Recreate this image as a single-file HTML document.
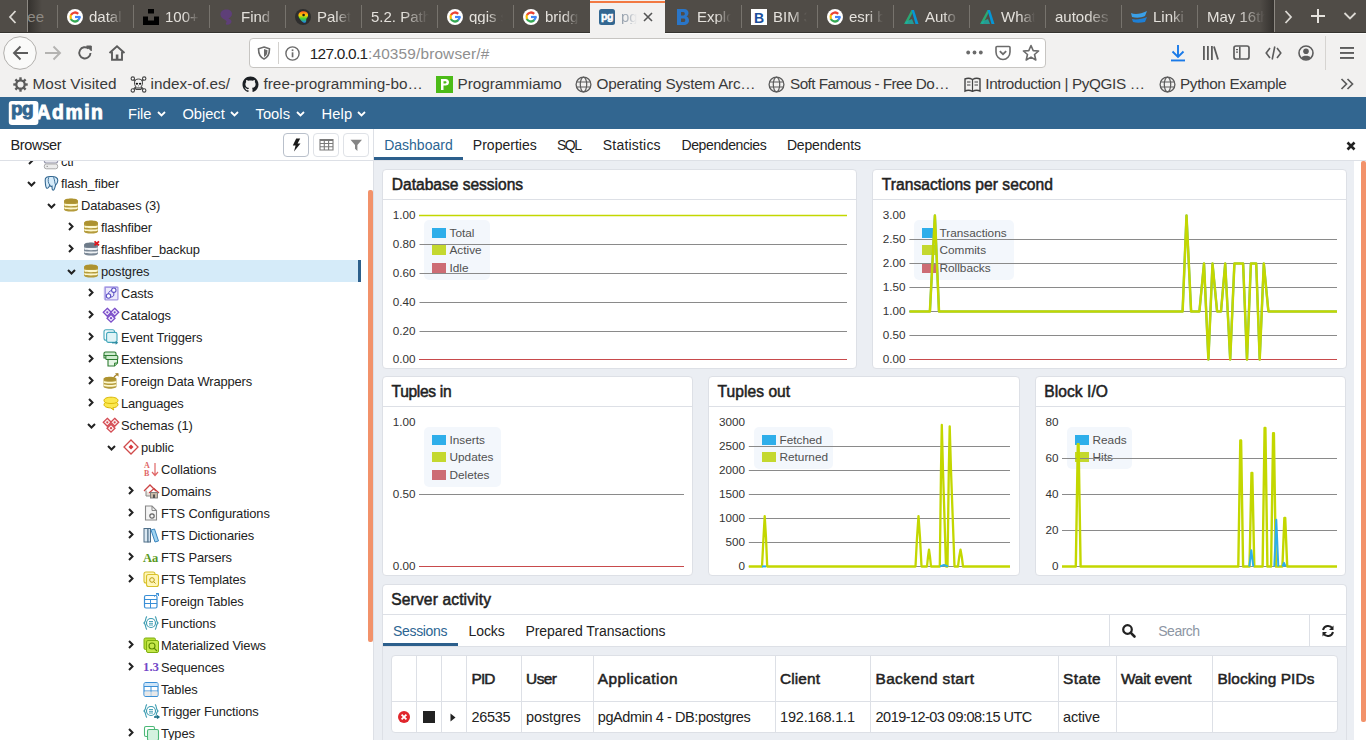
<!DOCTYPE html>
<html><head><meta charset="utf-8"><style>
*{box-sizing:border-box;margin:0;padding:0}
html,body{width:1366px;height:740px;overflow:hidden;background:#fff;font-family:"Liberation Sans",sans-serif}
svg{position:absolute;overflow:visible}
.a{position:absolute}
.t{position:absolute;white-space:nowrap}
#tabbar{position:absolute;left:0;top:0;width:1366px;height:33px;background:#4e4b46}
.tsep{position:absolute;top:5px;width:1px;height:23px;background:#75716b}
.ttx{position:absolute;top:8px;font-size:15px;color:#e6e3de;white-space:nowrap;overflow:hidden}
#nav{position:absolute;left:0;top:33px;width:1366px;height:38px;background:#f2f1f0}
#url{position:absolute;left:249px;top:5px;width:797px;height:30px;background:#fff;border:1px solid #c9c7c4;border-radius:3px}
#bm{position:absolute;left:0;top:71px;width:1366px;height:26px;background:#f2f1f0}
.bmt{position:absolute;top:4px;font-size:15.3px;color:#3c3c3c;white-space:nowrap}
#pgnav{position:absolute;left:0;top:97px;width:1366px;height:32px;background:#326690}
.menu{position:absolute;top:7px;font-size:14.7px;color:#fff;white-space:nowrap}
#brhead{position:absolute;left:0;top:129px;width:373px;height:32px;background:#fff;border-bottom:1px solid #dde0e6}
#tree{position:absolute;left:0;top:161px;width:373px;height:579px;background:#fff;overflow:hidden}
.row{position:absolute;left:0;width:361px;height:22px}
.rt{position:absolute;top:4px;font-size:13px;color:#222;white-space:nowrap}
#vsplit{position:absolute;left:373px;top:129px;width:1px;height:611px;background:#dde0e6}
#dhead{position:absolute;left:374px;top:129px;width:992px;height:32px;background:#fff;border-bottom:1px solid #dde0e6}
.dtab{position:absolute;top:8px;font-size:14px;color:#222;white-space:nowrap}
#dash{position:absolute;left:374px;top:161px;width:980px;height:579px;background:#ebeef3}
.card{position:absolute;background:#fff;border:1px solid #dde0e6;border-radius:4px;overflow:hidden}
.ctitle{position:absolute;left:8px;top:7px;font-size:14.6px;font-weight:bold;color:#222;white-space:nowrap}
.chead{position:absolute;left:0;top:0;width:100%;height:30px;border-bottom:1px solid #dde0e6}
.ylab{position:absolute;font-size:11.7px;color:#333;text-align:right;white-space:nowrap}
.leg{position:absolute;background:rgba(236,243,252,0.6);border-radius:5px}
.sw{position:absolute;width:14px;height:10px}
.lt{position:absolute;font-size:11.8px;color:#444;white-space:nowrap}
</style></head><body>
<div class="a" style="left:0px;top:0px;width:1366px;height:33px;background:#504c47"></div>
<div class="a" style="left:57px;top:5px;width:1px;height:23px;background:#77736d"></div>
<div class="a" style="left:133px;top:5px;width:1px;height:23px;background:#77736d"></div>
<div class="a" style="left:209px;top:5px;width:1px;height:23px;background:#77736d"></div>
<div class="a" style="left:285px;top:5px;width:1px;height:23px;background:#77736d"></div>
<div class="a" style="left:361px;top:5px;width:1px;height:23px;background:#77736d"></div>
<div class="a" style="left:437px;top:5px;width:1px;height:23px;background:#77736d"></div>
<div class="a" style="left:513px;top:5px;width:1px;height:23px;background:#77736d"></div>
<div class="a" style="left:741px;top:5px;width:1px;height:23px;background:#77736d"></div>
<div class="a" style="left:817px;top:5px;width:1px;height:23px;background:#77736d"></div>
<div class="a" style="left:893px;top:5px;width:1px;height:23px;background:#77736d"></div>
<div class="a" style="left:969px;top:5px;width:1px;height:23px;background:#77736d"></div>
<div class="a" style="left:1045px;top:5px;width:1px;height:23px;background:#77736d"></div>
<div class="a" style="left:1121px;top:5px;width:1px;height:23px;background:#77736d"></div>
<div class="a" style="left:1197px;top:5px;width:1px;height:23px;background:#77736d"></div>
<div class="a" style="left:27px;top:0px;width:1px;height:33px;background:#8d8983"></div>
<div class="a" style="left:28px;top:0px;width:14px;height:33px;background:linear-gradient(to right,rgba(30,28,26,0.55),rgba(80,76,71,0))"></div>
<svg style="left:8px;top:9px;" width="10" height="16" viewBox="0 0 10 16"><path d="M7.5 2 L2 8 L7.5 14" fill="none" stroke="#dcd9d4" stroke-width="1.8"/></svg>
<div class="a" style="left:1274px;top:0px;width:1px;height:33px;background:#8d8983"></div>
<div class="a" style="left:1260px;top:0px;width:14px;height:33px;background:linear-gradient(to left,rgba(30,28,26,0.55),rgba(80,76,71,0))"></div>
<svg style="left:1283px;top:9px;" width="10" height="16" viewBox="0 0 10 16"><path d="M2.5 2 L8 8 L2.5 14" fill="none" stroke="#dcd9d4" stroke-width="1.8"/></svg>
<svg style="left:1310px;top:8px;" width="16" height="16" viewBox="0 0 16 16"><path d="M8 1 V15 M1 8 H15" fill="none" stroke="#e6e3de" stroke-width="2"/></svg>
<svg style="left:1343px;top:11px;" width="14" height="10" viewBox="0 0 14 10"><path d="M1.5 2 L7 7.5 L12.5 2" fill="none" stroke="#dcd9d4" stroke-width="1.8"/></svg>
<div class="t" style="left:28px;top:9.30px;font-size:15px;line-height:15px;color:#8d8983;width:16px;overflow:hidden;direction:rtl">ee</div>
<svg style="left:67px;top:9px;" width="16" height="16" viewBox="0 0 16 16"><circle cx="8" cy="8" r="8" fill="#fff"/><path d="M12.50 8.00 A4.5 4.5 0 0 1 10.89 11.45" fill="none" stroke="#4285f4" stroke-width="2.3"/><path d="M11.18 11.18 A4.5 4.5 0 0 1 3.77 9.54" fill="none" stroke="#34a853" stroke-width="2.3"/><path d="M3.92 9.90 A4.5 4.5 0 0 1 4.31 5.42" fill="none" stroke="#fbbc05" stroke-width="2.3"/><path d="M4.10 5.75 A4.5 4.5 0 0 1 11.18 4.82" fill="none" stroke="#ea4335" stroke-width="2.3"/><rect x="8" y="6.9" width="5.65" height="2.2" fill="#4285f4"/></svg>
<div class="t" style="left:89px;top:9.30px;font-size:15px;line-height:15px;color:#e4e1dc;width:34px;overflow:hidden;-webkit-mask-image:linear-gradient(to right,#000 55%,transparent 100%)">datal</div>
<svg style="left:143px;top:9px;" width="16" height="16" viewBox="0 0 16 16"><rect x="5" y="0" width="6" height="4.5" fill="#000"/><path d="M0 7.5 H5 V11.5 H11 V7.5 H16 V16 H0Z" fill="#000"/></svg>
<div class="t" style="left:165px;top:9.30px;font-size:15px;line-height:15px;color:#e4e1dc;width:34px;overflow:hidden;-webkit-mask-image:linear-gradient(to right,#000 55%,transparent 100%)">100+</div>
<svg style="left:219px;top:9px;" width="16" height="16" viewBox="0 0 16 16"><path d="M1.5 6 C1 2.5 4 0.5 7.5 0.5 C11 0.5 13 2.5 13 5 C13 7.5 11 8.5 9.5 9.5 C10.5 10 12.5 10.5 12.5 12.5 C12.5 14.5 10.5 16 8 15.8 C6.5 15.7 6.5 14 7.5 13.2 C8.3 12.6 6.8 11.5 5.5 10.5 C3.5 9.5 1.8 8.5 1.5 6Z" fill="#5e3f78"/></svg>
<div class="t" style="left:241px;top:9.30px;font-size:15px;line-height:15px;color:#e4e1dc;width:34px;overflow:hidden;-webkit-mask-image:linear-gradient(to right,#000 55%,transparent 100%)">Find</div>
<svg style="left:295px;top:9px;" width="16" height="16" viewBox="0 0 16 16"><defs><linearGradient id="rb" x1="0" y1="0" x2="0" y2="1"><stop offset="0" stop-color="#ff5a1f"/><stop offset="0.35" stop-color="#ffd000"/><stop offset="0.65" stop-color="#3cd13c"/><stop offset="1" stop-color="#1e7bff"/></linearGradient></defs><circle cx="8" cy="8" r="8" fill="#2e2e2e"/><path d="M3.5 7 C3 3.5 6 2 9 2.2 C12 2.4 13.5 4.5 13 7 C12.6 8.8 11 9.5 11.2 11 C11.5 13 10.5 14 9 13.8 C7.5 13.5 6.5 12 5.5 10.8 C4.5 9.5 3.7 8.5 3.5 7Z" fill="url(#rb)"/><circle cx="8.6" cy="6" r="1.3" fill="#1a1a1a"/></svg>
<div class="t" style="left:317px;top:9.30px;font-size:15px;line-height:15px;color:#e4e1dc;width:34px;overflow:hidden;-webkit-mask-image:linear-gradient(to right,#000 55%,transparent 100%)">Palet</div>
<div class="t" style="left:371px;top:9.30px;font-size:15px;line-height:15px;color:#e4e1dc;width:58px;overflow:hidden;-webkit-mask-image:linear-gradient(to right,#000 55%,transparent 100%)">5.2. Path</div>
<svg style="left:447px;top:9px;" width="16" height="16" viewBox="0 0 16 16"><circle cx="8" cy="8" r="8" fill="#fff"/><path d="M12.50 8.00 A4.5 4.5 0 0 1 10.89 11.45" fill="none" stroke="#4285f4" stroke-width="2.3"/><path d="M11.18 11.18 A4.5 4.5 0 0 1 3.77 9.54" fill="none" stroke="#34a853" stroke-width="2.3"/><path d="M3.92 9.90 A4.5 4.5 0 0 1 4.31 5.42" fill="none" stroke="#fbbc05" stroke-width="2.3"/><path d="M4.10 5.75 A4.5 4.5 0 0 1 11.18 4.82" fill="none" stroke="#ea4335" stroke-width="2.3"/><rect x="8" y="6.9" width="5.65" height="2.2" fill="#4285f4"/></svg>
<div class="t" style="left:469px;top:9.30px;font-size:15px;line-height:15px;color:#e4e1dc;width:34px;overflow:hidden;-webkit-mask-image:linear-gradient(to right,#000 55%,transparent 100%)">qgis s</div>
<svg style="left:523px;top:9px;" width="16" height="16" viewBox="0 0 16 16"><circle cx="8" cy="8" r="8" fill="#fff"/><path d="M12.50 8.00 A4.5 4.5 0 0 1 10.89 11.45" fill="none" stroke="#4285f4" stroke-width="2.3"/><path d="M11.18 11.18 A4.5 4.5 0 0 1 3.77 9.54" fill="none" stroke="#34a853" stroke-width="2.3"/><path d="M3.92 9.90 A4.5 4.5 0 0 1 4.31 5.42" fill="none" stroke="#fbbc05" stroke-width="2.3"/><path d="M4.10 5.75 A4.5 4.5 0 0 1 11.18 4.82" fill="none" stroke="#ea4335" stroke-width="2.3"/><rect x="8" y="6.9" width="5.65" height="2.2" fill="#4285f4"/></svg>
<div class="t" style="left:545px;top:9.30px;font-size:15px;line-height:15px;color:#e4e1dc;width:34px;overflow:hidden;-webkit-mask-image:linear-gradient(to right,#000 55%,transparent 100%)">bridg</div>
<div class="a" style="left:590px;top:0px;width:75px;height:33px;background:#f2f1f0"></div>
<div class="a" style="left:590px;top:1px;width:75px;height:2px;background:#f27942"></div>
<svg style="left:599px;top:9px;" width="16" height="16" viewBox="0 0 16 16"><rect x="0" y="0" width="16" height="16" rx="2.5" fill="#336791"/><text x="8" y="11.3" font-family="Liberation Sans" font-weight="bold" font-size="10.5" fill="#fff" stroke="#fff" stroke-width="0.5" text-anchor="middle" letter-spacing="-0.4">pg</text></svg>
<div class="t" style="left:621px;top:9.30px;font-size:15px;line-height:15px;color:#9aa4b0;width:16px;overflow:hidden;-webkit-mask-image:linear-gradient(to right,#000 30%,transparent 100%)">pg</div>
<svg style="left:643px;top:12px;" width="10" height="10" viewBox="0 0 10 10"><path d="M1 1 L9 9 M9 1 L1 9" stroke="#555" stroke-width="1.6"/></svg>
<svg style="left:677px;top:9px;" width="12" height="16" viewBox="0 0 12 16"><path d="M0 0 H7 C10 0 11.5 2 11.5 4 C11.5 5.6 10.6 6.8 9.5 7.5 C11 8.1 12 9.6 12 11.5 C12 14 10 16 6.5 16 H0Z M4 3 V6.5 H6.3 C7.3 6.5 7.8 5.8 7.8 4.8 C7.8 3.7 7.2 3 6.2 3Z M4 9.5 V13 H6.6 C7.7 13 8.3 12.3 8.3 11.2 C8.3 10.2 7.7 9.5 6.6 9.5Z" fill="#2a76c8"/></svg>
<div class="t" style="left:697px;top:9.30px;font-size:15px;line-height:15px;color:#e4e1dc;width:34px;overflow:hidden;-webkit-mask-image:linear-gradient(to right,#000 55%,transparent 100%)">Explo</div>
<svg style="left:751px;top:9px;" width="16" height="16" viewBox="0 0 16 16"><rect width="16" height="16" fill="#fff"/><text x="8" y="13.5" font-family="Liberation Sans" font-weight="bold" font-size="14" fill="#1a4f9c" text-anchor="middle">B</text></svg>
<div class="t" style="left:773px;top:9.30px;font-size:15px;line-height:15px;color:#e4e1dc;width:34px;overflow:hidden;-webkit-mask-image:linear-gradient(to right,#000 55%,transparent 100%)">BIM 3</div>
<svg style="left:827px;top:9px;" width="16" height="16" viewBox="0 0 16 16"><circle cx="8" cy="8" r="8" fill="#fff"/><path d="M12.50 8.00 A4.5 4.5 0 0 1 10.89 11.45" fill="none" stroke="#4285f4" stroke-width="2.3"/><path d="M11.18 11.18 A4.5 4.5 0 0 1 3.77 9.54" fill="none" stroke="#34a853" stroke-width="2.3"/><path d="M3.92 9.90 A4.5 4.5 0 0 1 4.31 5.42" fill="none" stroke="#fbbc05" stroke-width="2.3"/><path d="M4.10 5.75 A4.5 4.5 0 0 1 11.18 4.82" fill="none" stroke="#ea4335" stroke-width="2.3"/><rect x="8" y="6.9" width="5.65" height="2.2" fill="#4285f4"/></svg>
<div class="t" style="left:849px;top:9.30px;font-size:15px;line-height:15px;color:#e4e1dc;width:34px;overflow:hidden;-webkit-mask-image:linear-gradient(to right,#000 55%,transparent 100%)">esri b</div>
<svg style="left:903px;top:9px;" width="16" height="16" viewBox="0 0 16 16"><path d="M1 15 L8.5 1 L11 1 L4 15Z" fill="#2aa873"/><path d="M8.5 1 L11 1 L15.5 15 L12.5 15Z" fill="#0696d7"/><path d="M2 13 L9 10 L11 15 L3 15Z" fill="#1ab2a8" opacity="0.8"/></svg>
<div class="t" style="left:925px;top:9.30px;font-size:15px;line-height:15px;color:#e4e1dc;width:34px;overflow:hidden;-webkit-mask-image:linear-gradient(to right,#000 55%,transparent 100%)">Auto</div>
<svg style="left:979px;top:9px;" width="16" height="16" viewBox="0 0 16 16"><path d="M1 15 L8.5 1 L11 1 L4 15Z" fill="#2aa873"/><path d="M8.5 1 L11 1 L15.5 15 L12.5 15Z" fill="#0696d7"/><path d="M2 13 L9 10 L11 15 L3 15Z" fill="#1ab2a8" opacity="0.8"/></svg>
<div class="t" style="left:1001px;top:9.30px;font-size:15px;line-height:15px;color:#e4e1dc;width:34px;overflow:hidden;-webkit-mask-image:linear-gradient(to right,#000 55%,transparent 100%)">What</div>
<div class="t" style="left:1055px;top:9.30px;font-size:15px;line-height:15px;color:#e4e1dc;width:58px;overflow:hidden;-webkit-mask-image:linear-gradient(to right,#000 55%,transparent 100%)">autodes</div>
<svg style="left:1131px;top:11px;" width="16" height="12" viewBox="0 0 16 12"><path d="M0 2 C4 4 10 3 16 0 L14 5 C10 7 5 7 1 6Z" fill="#3aa0e8"/><path d="M1 8 C5 9 11 8 16 6 L14 11 C9 12 5 12 2 11Z" fill="#1d7fd6"/></svg>
<div class="t" style="left:1153px;top:9.30px;font-size:15px;line-height:15px;color:#e4e1dc;width:34px;overflow:hidden;-webkit-mask-image:linear-gradient(to right,#000 55%,transparent 100%)">Linki</div>
<div class="t" style="left:1207px;top:9.30px;font-size:15px;line-height:15px;color:#e4e1dc;width:58px;overflow:hidden;-webkit-mask-image:linear-gradient(to right,#000 55%,transparent 100%)">May 16th</div>
<div class="a" style="left:0px;top:33px;width:1366px;height:38px;background:#f2f1f0"></div>
<div class="a" style="left:0px;top:32px;width:590px;height:1px;background:#35332f"></div>
<div class="a" style="left:665px;top:32px;width:701px;height:1px;background:#35332f"></div>
<div class="a" style="left:0px;top:33px;width:590px;height:1px;background:#fbfbfa"></div>
<div class="a" style="left:665px;top:33px;width:701px;height:1px;background:#fbfbfa"></div>
<svg style="left:3px;top:36px;" width="34" height="34" viewBox="0 0 34 34"><circle cx="17" cy="17" r="16.3" fill="#fafaf9" stroke="#a9a7a4" stroke-width="0.9"/><path d="M11 17 H25 M17.5 10.5 L11 17 L17.5 23.5" fill="none" stroke="#5c5c5c" stroke-width="1.9"/></svg>
<svg style="left:44px;top:45px;" width="18" height="16" viewBox="0 0 18 16"><path d="M1 8 H16 M9.5 1.5 L16 8 L9.5 14.5" fill="none" stroke="#b4b3b1" stroke-width="1.9"/></svg>
<svg style="left:77px;top:45px;" width="16" height="16" viewBox="0 0 16 16"><path d="M13.5 8 A5.6 5.6 0 1 1 11.6 3.6" fill="none" stroke="#5c5c5c" stroke-width="1.9"/><path d="M9.5 1 H14.3 V5.8Z" fill="#5c5c5c" stroke="#5c5c5c" stroke-width="1"/></svg>
<svg style="left:108px;top:45px;" width="18" height="16" viewBox="0 0 18 16"><path d="M1.5 8 L9 1.3 L16.5 8" fill="none" stroke="#5c5c5c" stroke-width="1.9"/><path d="M4 6.5 V14.8 H14 V6.5" fill="none" stroke="#5c5c5c" stroke-width="1.9"/><rect x="7.8" y="9.5" width="2.6" height="5" fill="#5c5c5c"/></svg>
<div class="a" style="left:249px;top:38px;width:797px;height:30px;background:#fff;border:1px solid #c7c5c2;border-radius:4px"></div>
<svg style="left:257px;top:46px;" width="14" height="14" viewBox="0 0 14 14"><path d="M7 1 L12.5 2.8 C12.5 8.5 10.5 11.5 7 13 C3.5 11.5 1.5 8.5 1.5 2.8Z" fill="none" stroke="#6b6b6b" stroke-width="1.6"/><path d="M7 3 L10.5 4.2 C10.5 8 9.3 10 7 11Z" fill="#6b6b6b"/></svg>
<div class="a" style="left:278px;top:42px;width:1px;height:22px;background:#d3d1ce"></div>
<svg style="left:285px;top:46px;" width="15" height="15" viewBox="0 0 15 15"><circle cx="7.5" cy="7.5" r="6.6" fill="none" stroke="#6b6b6b" stroke-width="1.4"/><rect x="6.7" y="6.3" width="1.7" height="5" fill="#6b6b6b"/><rect x="6.7" y="3.4" width="1.7" height="1.7" fill="#6b6b6b"/></svg>
<div class="t" style="left:309.8px;top:46.36px;font-size:15.4px;line-height:15.4px;color:#222;letter-spacing:-0.753px;">127.0.0.1</div>
<div class="t" style="left:368px;top:46.36px;font-size:15.4px;line-height:15.4px;color:#8f8f8f;letter-spacing:0.153px;">:40359/browser/#</div>
<svg style="left:966px;top:50px;" width="18" height="5" viewBox="0 0 18 5"><circle cx="2.2" cy="2.5" r="1.9" fill="#6b6b6b"/><circle cx="8.5" cy="2.5" r="1.9" fill="#6b6b6b"/><circle cx="14.8" cy="2.5" r="1.9" fill="#6b6b6b"/></svg>
<svg style="left:995px;top:45px;" width="16" height="16" viewBox="0 0 16 16"><path d="M2 1.5 H14 C14.8 1.5 15 2 15 2.5 V7 C15 11 12 14.5 8 14.5 C4 14.5 1 11 1 7 V2.5 C1 2 1.2 1.5 2 1.5Z" fill="none" stroke="#6b6b6b" stroke-width="1.6"/><path d="M4.8 6.2 L8 9.2 L11.2 6.2" fill="none" stroke="#6b6b6b" stroke-width="1.8"/></svg>
<svg style="left:1022px;top:44px;" width="18" height="18" viewBox="0 0 18 18"><path d="M9 1.5 L11.2 6.6 L16.6 7 L12.5 10.5 L13.8 16 L9 13.1 L4.2 16 L5.5 10.5 L1.4 7 L6.8 6.6Z" fill="none" stroke="#6b6b6b" stroke-width="1.6" stroke-linejoin="round"/></svg>
<svg style="left:1170px;top:44px;" width="16" height="18" viewBox="0 0 16 18"><path d="M8 1 V13 M2.5 7.5 L8 13 L13.5 7.5" fill="none" stroke="#1a7ae8" stroke-width="1.9"/><rect x="1" y="15.5" width="14" height="1.9" fill="#1a7ae8"/></svg>
<svg style="left:1202px;top:45px;" width="17" height="16" viewBox="0 0 17 16"><rect x="1" y="1" width="1.8" height="14" fill="#5c5c5c"/><rect x="5" y="1" width="1.8" height="14" fill="#5c5c5c"/><rect x="9" y="1" width="1.8" height="14" fill="#5c5c5c"/><path d="M12 1.5 L16 14.5" stroke="#5c5c5c" stroke-width="1.8"/></svg>
<svg style="left:1233px;top:45px;" width="17" height="15" viewBox="0 0 17 15"><rect x="1" y="1" width="15" height="13" rx="2" fill="none" stroke="#5c5c5c" stroke-width="1.7"/><rect x="6" y="1.5" width="1.6" height="12" fill="#5c5c5c"/><rect x="3" y="4" width="2" height="1.2" fill="#5c5c5c"/><rect x="3" y="6.5" width="2" height="1.2" fill="#5c5c5c"/></svg>
<svg style="left:1265px;top:45px;" width="17" height="16" viewBox="0 0 17 16"><path d="M5 3 L1.2 8 L5 13 M12 3 L15.8 8 L12 13 M9.8 1.5 L7.2 14.5" fill="none" stroke="#5c5c5c" stroke-width="1.6"/></svg>
<svg style="left:1298px;top:45px;" width="16" height="16" viewBox="0 0 16 16"><circle cx="8" cy="8" r="7" fill="none" stroke="#5c5c5c" stroke-width="1.6"/><circle cx="8" cy="6.2" r="2.8" fill="#5c5c5c"/><path d="M3.3 12.5 C4.5 10 11.5 10 12.7 12.5 C11.5 14 9.5 14.8 8 14.8 C6.5 14.8 4.5 14 3.3 12.5Z" fill="#5c5c5c"/></svg>
<div class="a" style="left:1325px;top:36px;width:1px;height:34px;background:#d6d4d1"></div>
<svg style="left:1340px;top:46px;" width="14" height="14" viewBox="0 0 14 14"><rect x="0" y="1" width="14" height="1.9" fill="#5c5c5c"/><rect x="0" y="6" width="14" height="1.9" fill="#5c5c5c"/><rect x="0" y="11" width="14" height="1.9" fill="#5c5c5c"/></svg>
<div class="a" style="left:0px;top:71px;width:1366px;height:26px;background:#f2f1f0"></div>
<svg style="left:13px;top:77px;" width="15" height="15" viewBox="0 0 15 15"><circle cx="7.5" cy="7.5" r="4.2" fill="none" stroke="#5c5c5c" stroke-width="2.2"/><rect x="6.3" y="0.3" width="2.4" height="3.4" fill="#5c5c5c" transform="rotate(0 7.5 7.5)"/><rect x="6.3" y="0.3" width="2.4" height="3.4" fill="#5c5c5c" transform="rotate(45 7.5 7.5)"/><rect x="6.3" y="0.3" width="2.4" height="3.4" fill="#5c5c5c" transform="rotate(90 7.5 7.5)"/><rect x="6.3" y="0.3" width="2.4" height="3.4" fill="#5c5c5c" transform="rotate(135 7.5 7.5)"/><rect x="6.3" y="0.3" width="2.4" height="3.4" fill="#5c5c5c" transform="rotate(180 7.5 7.5)"/><rect x="6.3" y="0.3" width="2.4" height="3.4" fill="#5c5c5c" transform="rotate(225 7.5 7.5)"/><rect x="6.3" y="0.3" width="2.4" height="3.4" fill="#5c5c5c" transform="rotate(270 7.5 7.5)"/><rect x="6.3" y="0.3" width="2.4" height="3.4" fill="#5c5c5c" transform="rotate(315 7.5 7.5)"/></svg>
<div class="t" style="left:32.5px;top:75.55px;font-size:15.3px;line-height:15.3px;color:#3a3a3a;letter-spacing:0.095px;">Most Visited</div>
<svg style="left:129.5px;top:75.5px;" width="17" height="17" viewBox="0 0 17 17"><path d="M3 2.5 L14 14.5 M14 2.5 L3 14.5" stroke="#555" stroke-width="2.2"/><circle cx="2.8" cy="2.6" r="1.7" fill="#fff" stroke="#444" stroke-width="1.1"/><circle cx="14.2" cy="2.6" r="1.7" fill="#fff" stroke="#444" stroke-width="1.1"/><circle cx="2.8" cy="14.4" r="1.7" fill="#fff" stroke="#444" stroke-width="1.1"/><circle cx="14.2" cy="14.4" r="1.7" fill="#fff" stroke="#444" stroke-width="1.1"/><path d="M4.5 7 C4.5 4 6.3 3 8.5 3 C10.7 3 12.5 4 12.5 7 C12.5 9 11.7 10 11 10.5 V13.5 H6 V10.5 C5.3 10 4.5 9 4.5 7Z" fill="#f2f2f2" stroke="#444" stroke-width="1"/><ellipse cx="6.9" cy="7.7" rx="1.2" ry="1" fill="#111"/><ellipse cx="10.1" cy="7.7" rx="1.2" ry="1" fill="#111"/><path d="M8.5 9 L8 10.3 H9Z" fill="#222"/><path d="M6.5 12 H10.5" stroke="#777" stroke-width="1.6"/></svg>
<div class="t" style="left:150.5px;top:75.55px;font-size:15.3px;line-height:15.3px;color:#3a3a3a;letter-spacing:0.037px;">index-of.es/</div>
<svg style="left:242px;top:76px;" width="17" height="17" viewBox="0 0 17 17"><path d="M8.5 0.5 C4 0.5 0.5 4 0.5 8.5 C0.5 12 2.8 15 6 16 C6.4 16.1 6.5 15.8 6.5 15.6 V14.2 C4.3 14.7 3.8 13.2 3.8 13.2 C3.4 12.3 2.9 12 2.9 12 C2.2 11.5 3 11.5 3 11.5 C3.8 11.6 4.2 12.3 4.2 12.3 C4.9 13.5 6.1 13.2 6.5 13 C6.6 12.5 6.8 12.2 7 12 C5.2 11.8 3.4 11.1 3.4 8.1 C3.4 7.2 3.7 6.5 4.2 6 C4.1 5.8 3.8 5 4.3 3.9 C4.3 3.9 5 3.7 6.5 4.7 C7.2 4.5 7.9 4.4 8.5 4.4 C9.2 4.4 9.9 4.5 10.5 4.7 C12 3.7 12.7 3.9 12.7 3.9 C13.2 5 12.9 5.8 12.8 6 C13.3 6.5 13.6 7.2 13.6 8.1 C13.6 11.1 11.8 11.8 10 12 C10.3 12.3 10.5 12.8 10.5 13.5 V15.6 C10.5 15.8 10.6 16.1 11 16 C14.2 15 16.5 12 16.5 8.5 C16.5 4 13 0.5 8.5 0.5Z" fill="#1b1f23"/></svg>
<div class="t" style="left:263.5px;top:75.55px;font-size:15.3px;line-height:15.3px;color:#3a3a3a;letter-spacing:0.015px;">free-programming-bo…</div>
<svg style="left:436px;top:76px;" width="17" height="17" viewBox="0 0 17 17"><rect width="17" height="17" fill="#4cbb17"/><path d="M5 14 V3 H9.5 C11.8 3 13 4.3 13 6.3 C13 8.3 11.8 9.6 9.5 9.6 H7.5 V14Z M7.5 5.2 V7.4 H9.3 C10.1 7.4 10.5 7 10.5 6.3 C10.5 5.6 10.1 5.2 9.3 5.2Z" fill="#fff"/></svg>
<div class="t" style="left:457.5px;top:75.55px;font-size:15.3px;line-height:15.3px;color:#3a3a3a;letter-spacing:-0.016px;">Programmiamo</div>
<svg style="left:575px;top:76px;" width="17" height="17" viewBox="0 0 17 17"><circle cx="8.5" cy="8.5" r="7.4" fill="none" stroke="#5c5c5c" stroke-width="1.3"/><ellipse cx="8.5" cy="8.5" rx="3.2" ry="7.4" fill="none" stroke="#5c5c5c" stroke-width="1.2"/><path d="M1.5 6 H15.5 M1.5 11 H15.5" stroke="#5c5c5c" stroke-width="1.2"/></svg>
<div class="t" style="left:596.5px;top:75.55px;font-size:15.3px;line-height:15.3px;color:#3a3a3a;letter-spacing:-0.246px;">Operating System Arc…</div>
<svg style="left:768px;top:76px;" width="17" height="17" viewBox="0 0 17 17"><circle cx="8.5" cy="8.5" r="7.4" fill="none" stroke="#5c5c5c" stroke-width="1.3"/><ellipse cx="8.5" cy="8.5" rx="3.2" ry="7.4" fill="none" stroke="#5c5c5c" stroke-width="1.2"/><path d="M1.5 6 H15.5 M1.5 11 H15.5" stroke="#5c5c5c" stroke-width="1.2"/></svg>
<div class="t" style="left:790px;top:75.55px;font-size:15.3px;line-height:15.3px;color:#3a3a3a;letter-spacing:-0.543px;">Soft Famous - Free Do…</div>
<svg style="left:964px;top:77px;" width="17" height="15" viewBox="0 0 17 15"><path d="M1 2 C3 1 6 1 8.5 2.5 C11 1 14 1 16 2 V14 C14 13 11 13 8.5 14.3 C6 13 3 13 1 14Z" fill="none" stroke="#444" stroke-width="1.4"/><path d="M8.5 2.5 V14" stroke="#444" stroke-width="1.2"/><path d="M3 5 H6.5 M3 8 H6.5 M10.5 5 H14 M10.5 8 H14" stroke="#444" stroke-width="1"/></svg>
<div class="t" style="left:985.3px;top:75.55px;font-size:15.3px;line-height:15.3px;color:#3a3a3a;letter-spacing:-0.381px;">Introduction | PyQGIS …</div>
<svg style="left:1159px;top:76px;" width="17" height="17" viewBox="0 0 17 17"><circle cx="8.5" cy="8.5" r="7.4" fill="none" stroke="#5c5c5c" stroke-width="1.3"/><ellipse cx="8.5" cy="8.5" rx="3.2" ry="7.4" fill="none" stroke="#5c5c5c" stroke-width="1.2"/><path d="M1.5 6 H15.5 M1.5 11 H15.5" stroke="#5c5c5c" stroke-width="1.2"/></svg>
<div class="t" style="left:1180px;top:75.55px;font-size:15.3px;line-height:15.3px;color:#3a3a3a;letter-spacing:-0.355px;">Python Example</div>
<svg style="left:1340px;top:77px;" width="14" height="14" viewBox="0 0 14 14"><path d="M1.5 2 L6.5 7 L1.5 12 M7.5 2 L12.5 7 L7.5 12" fill="none" stroke="#5c5c5c" stroke-width="1.7"/></svg>
<div class="a" style="left:0px;top:97px;width:1366px;height:32px;background:#326690"></div>
<svg style="left:0px;top:97px;" width="110" height="32" viewBox="0 0 110 32"><rect x="8.8" y="3.9" width="29.6" height="24" rx="3.2" fill="#fff"/><text x="11" y="18.3" font-family="Liberation Sans" font-weight="bold" font-size="19" fill="#326690" stroke="#326690" stroke-width="0.9" letter-spacing="-0.6">pg</text><text x="36.6" y="22.2" font-family="Liberation Sans" font-weight="bold" font-size="19.4" fill="#fff" stroke="#fff" stroke-width="0.9" letter-spacing="1.5">Admin</text></svg>
<div class="t" style="left:128px;top:106.56px;font-size:14.7px;line-height:14.7px;color:#fff;letter-spacing:-0.063px;">File</div>
<svg style="left:157px;top:111px;" width="9" height="6" viewBox="0 0 9 6"><path d="M1 1 L4.5 4.5 L8 1" fill="none" stroke="#fff" stroke-width="1.8"/></svg>
<div class="t" style="left:182.4px;top:106.56px;font-size:14.7px;line-height:14.7px;color:#fff;letter-spacing:-0.017px;">Object</div>
<svg style="left:229.5px;top:111px;" width="9" height="6" viewBox="0 0 9 6"><path d="M1 1 L4.5 4.5 L8 1" fill="none" stroke="#fff" stroke-width="1.8"/></svg>
<div class="t" style="left:255.5px;top:106.56px;font-size:14.7px;line-height:14.7px;color:#fff;letter-spacing:0.046px;">Tools</div>
<svg style="left:295.5px;top:111px;" width="9" height="6" viewBox="0 0 9 6"><path d="M1 1 L4.5 4.5 L8 1" fill="none" stroke="#fff" stroke-width="1.8"/></svg>
<div class="t" style="left:321.4px;top:106.56px;font-size:14.7px;line-height:14.7px;color:#fff;letter-spacing:0.155px;">Help</div>
<svg style="left:357px;top:111px;" width="9" height="6" viewBox="0 0 9 6"><path d="M1 1 L4.5 4.5 L8 1" fill="none" stroke="#fff" stroke-width="1.8"/></svg>
<div class="a" style="left:0px;top:129px;width:373px;height:31px;background:#fff"></div>
<div class="a" style="left:0px;top:160px;width:373px;height:1px;background:#dde0e6"></div>
<div class="t" style="left:10.5px;top:137.73px;font-size:14.5px;line-height:14.5px;color:#222;letter-spacing:-0.347px;">Browser</div>
<div class="a" style="left:283px;top:133px;width:25px;height:23px;background:#fff;border:1px solid #c6cbd3;border-radius:3px"></div>
<div class="a" style="left:313px;top:133px;width:25px;height:23px;background:#fff;border:1px solid #dfe2e7;border-radius:3px"></div>
<div class="a" style="left:343px;top:133px;width:25px;height:23px;background:#fff;border:1px solid #dfe2e7;border-radius:3px"></div>
<svg style="left:291px;top:138px;" width="10" height="14" viewBox="0 0 10 14"><path d="M6.5 0.5 L1.5 7.5 H5 L3.5 13.5 L8.5 5.5 H5Z" fill="#222"/></svg>
<svg style="left:318px;top:139px;" width="14" height="12" viewBox="0 0 14 12"><rect x="0.5" y="0.5" width="13" height="11" fill="none" stroke="#8a8a8a" stroke-width="1"/><path d="M0.5 4 H13.5 M0.5 7.5 H13.5 M4.8 0.5 V11.5 M9.2 0.5 V11.5" stroke="#8a8a8a" stroke-width="1"/></svg>
<svg style="left:348px;top:139px;" width="14" height="13" viewBox="0 0 14 13"><path d="M0.5 0.5 H13.5 L8.5 6.5 V12.5 L5.5 10 V6.5Z" fill="#888"/></svg>
<div class="a" style="left:0px;top:161px;width:373px;height:579px;background:#fff"></div>
<svg style="left:27.5px;top:156px;" width="6" height="9" viewBox="0 0 6 9"><path d="M1 1 L4.5 4.5 L1 8" fill="none" stroke="#222" stroke-width="2"/></svg>
<svg style="left:43px;top:153px;" width="16" height="16" viewBox="0 0 16 16"><rect x="1.3" y="4.5" width="13.4" height="5.5" rx="2" fill="#e8e8ee" stroke="#9a9aae" stroke-width="1.1"/><rect x="1.3" y="11" width="13.4" height="4.8" rx="2" fill="#ececec" stroke="#aaa" stroke-width="1"/><path d="M3.5 13.4 H5" stroke="#888" stroke-width="0.8"/></svg>
<div class="t" style="left:61px;top:156.08px;font-size:12.9px;line-height:12.9px;color:#222;letter-spacing:-0.13px">ctl</div>
<svg style="left:27px;top:181px;" width="9" height="6" viewBox="0 0 9 6"><path d="M1 1 L4.5 4.5 L8 1" fill="none" stroke="#222" stroke-width="2"/></svg>
<svg style="left:43px;top:175px;" width="16" height="16" viewBox="0 0 16 16"><path d="M2.2 5.5 C1.8 2.5 4.5 1.2 8 1.5 C11.5 1.2 15 2.5 14.8 5.5 C14.7 7.5 13.8 9.2 12.6 10 C12.2 11.2 12 13.2 11 14.6 C10.2 15.6 9.2 15.2 9.1 13.5 L9 11.2 C8.1 11.6 7.2 11.2 6.8 10.2 C6 11.8 5 13.8 3.8 13.2 C2.3 12.3 2.4 8.2 2.2 5.5Z" fill="#d6ebf9" stroke="#336791" stroke-width="1.1"/><path d="M5.8 2.3 C4.6 5 5.2 8 6.8 10.2 M10.5 2.3 C11.8 4.5 11.5 8 12.6 10" fill="none" stroke="#336791" stroke-width="0.9"/></svg>
<div class="t" style="left:61px;top:178.08px;font-size:12.9px;line-height:12.9px;color:#222;letter-spacing:-0.13px">flash_fiber</div>
<svg style="left:47px;top:203px;" width="9" height="6" viewBox="0 0 9 6"><path d="M1 1 L4.5 4.5 L8 1" fill="none" stroke="#222" stroke-width="2"/></svg>
<svg style="left:63px;top:197px;" width="16" height="16" viewBox="0 0 16 16"><path d="M1 4 C1 2.3 4.1 1.5 8 1.5 C11.9 1.5 15 2.3 15 4 V12.2 C15 13.8 11.9 14.6 8 14.6 C4.1 14.6 1 13.8 1 12.2Z" fill="#b49b3b"/><path d="M1.3 6.2 C2.5 7.4 13.5 7.4 14.7 6.2 V8.3 C13.5 9.5 2.5 9.5 1.3 8.3Z" fill="#fdf8cf"/><path d="M1.3 9.7 C2.5 10.9 13.5 10.9 14.7 9.7 V11.5 C13.5 12.7 2.5 12.7 1.3 11.5Z" fill="#fdf8cf"/><ellipse cx="8" cy="4" rx="6.6" ry="2.3" fill="#ad9230"/></svg>
<div class="t" style="left:81px;top:200.08px;font-size:12.9px;line-height:12.9px;color:#222;letter-spacing:-0.13px">Databases (3)</div>
<svg style="left:67.5px;top:222px;" width="6" height="9" viewBox="0 0 6 9"><path d="M1 1 L4.5 4.5 L1 8" fill="none" stroke="#222" stroke-width="2"/></svg>
<svg style="left:83px;top:219px;" width="16" height="16" viewBox="0 0 16 16"><path d="M1 4 C1 2.3 4.1 1.5 8 1.5 C11.9 1.5 15 2.3 15 4 V12.2 C15 13.8 11.9 14.6 8 14.6 C4.1 14.6 1 13.8 1 12.2Z" fill="#b49b3b"/><path d="M1.3 6.2 C2.5 7.4 13.5 7.4 14.7 6.2 V8.3 C13.5 9.5 2.5 9.5 1.3 8.3Z" fill="#fdf8cf"/><path d="M1.3 9.7 C2.5 10.9 13.5 10.9 14.7 9.7 V11.5 C13.5 12.7 2.5 12.7 1.3 11.5Z" fill="#fdf8cf"/><ellipse cx="8" cy="4" rx="6.6" ry="2.3" fill="#ad9230"/></svg>
<div class="t" style="left:101px;top:222.08px;font-size:12.9px;line-height:12.9px;color:#222;letter-spacing:-0.13px">flashfiber</div>
<svg style="left:67.5px;top:244px;" width="6" height="9" viewBox="0 0 6 9"><path d="M1 1 L4.5 4.5 L1 8" fill="none" stroke="#222" stroke-width="2"/></svg>
<svg style="left:83px;top:241px;" width="16" height="16" viewBox="0 0 16 16"><path d="M1 4 C1 2.3 4.1 1.5 8 1.5 C11.9 1.5 15 2.3 15 4 V12.2 C15 13.8 11.9 14.6 8 14.6 C4.1 14.6 1 13.8 1 12.2Z" fill="#7b8896"/><path d="M1.3 6.2 C2.5 7.4 13.5 7.4 14.7 6.2 V8.3 C13.5 9.5 2.5 9.5 1.3 8.3Z" fill="#eef1f4"/><path d="M1.3 9.7 C2.5 10.9 13.5 10.9 14.7 9.7 V11.5 C13.5 12.7 2.5 12.7 1.3 11.5Z" fill="#eef1f4"/><ellipse cx="8" cy="4" rx="6.6" ry="2.3" fill="#6d7a88"/><path d="M11.5 0.3 L16 4.3 M16 0.3 L11.5 4.3" stroke="#e0161d" stroke-width="1.8"/></svg>
<div class="t" style="left:101px;top:244.08px;font-size:12.9px;line-height:12.9px;color:#222;letter-spacing:-0.13px">flashfiber_backup</div>
<div class="a" style="left:0px;top:260px;width:358px;height:22px;background:#d5ebf9"></div>
<div class="a" style="left:358px;top:260px;width:3px;height:22px;background:#2c5f8c"></div>
<svg style="left:67px;top:269px;" width="9" height="6" viewBox="0 0 9 6"><path d="M1 1 L4.5 4.5 L8 1" fill="none" stroke="#222" stroke-width="2"/></svg>
<svg style="left:83px;top:263px;" width="16" height="16" viewBox="0 0 16 16"><path d="M1 4 C1 2.3 4.1 1.5 8 1.5 C11.9 1.5 15 2.3 15 4 V12.2 C15 13.8 11.9 14.6 8 14.6 C4.1 14.6 1 13.8 1 12.2Z" fill="#b49b3b"/><path d="M1.3 6.2 C2.5 7.4 13.5 7.4 14.7 6.2 V8.3 C13.5 9.5 2.5 9.5 1.3 8.3Z" fill="#fdf8cf"/><path d="M1.3 9.7 C2.5 10.9 13.5 10.9 14.7 9.7 V11.5 C13.5 12.7 2.5 12.7 1.3 11.5Z" fill="#fdf8cf"/><ellipse cx="8" cy="4" rx="6.6" ry="2.3" fill="#ad9230"/></svg>
<div class="t" style="left:101px;top:266.08px;font-size:12.9px;line-height:12.9px;color:#222;letter-spacing:-0.13px">postgres</div>
<svg style="left:87.5px;top:288px;" width="6" height="9" viewBox="0 0 6 9"><path d="M1 1 L4.5 4.5 L1 8" fill="none" stroke="#222" stroke-width="2"/></svg>
<svg style="left:103px;top:285px;" width="16" height="16" viewBox="0 0 16 16"><rect x="0.8" y="1" width="14.8" height="14.5" rx="1.8" fill="#bfb6ec" /><rect x="2.5" y="2.5" width="12.3" height="12.3" fill="#ece9fb" stroke="#9d90e0" stroke-width="0.8"/><circle cx="5.5" cy="11" r="2.2" fill="#fff" stroke="#5b4fc4" stroke-width="1.1"/><circle cx="10.8" cy="5.2" r="2.2" fill="#fff" stroke="#5b4fc4" stroke-width="1.1"/><path d="M10.8 7.4 V10 C10.5 11.5 9.5 12 7.7 12 M5.5 8.8 C5.5 7 6.5 6 8.6 5.5" fill="none" stroke="#5b4fc4" stroke-width="1"/></svg>
<div class="t" style="left:121px;top:288.08px;font-size:12.9px;line-height:12.9px;color:#222;letter-spacing:-0.13px">Casts</div>
<svg style="left:87.5px;top:310px;" width="6" height="9" viewBox="0 0 6 9"><path d="M1 1 L4.5 4.5 L1 8" fill="none" stroke="#222" stroke-width="2"/></svg>
<svg style="left:103px;top:307px;" width="16" height="16" viewBox="0 0 16 16"><path d="M4.3 1.2999999999999998 L8.3 5.3 L4.3 9.3 L0.2999999999999998 5.3Z" fill="#efe8fb" stroke="#7a4cc8" stroke-width="1.3"/><circle cx="4.3" cy="5.3" r="1.1" fill="#7a4cc8"/><path d="M11.7 1.2999999999999998 L15.7 5.3 L11.7 9.3 L7.699999999999999 5.3Z" fill="#efe8fb" stroke="#7a4cc8" stroke-width="1.3"/><circle cx="11.7" cy="5.3" r="1.1" fill="#7a4cc8"/><path d="M8 7.199999999999999 L12.0 11.2 L8 15.2 L4.0 11.2Z" fill="#efe8fb" stroke="#7a4cc8" stroke-width="1.3"/><circle cx="8" cy="11.2" r="1.1" fill="#7a4cc8"/></svg>
<div class="t" style="left:121px;top:310.08px;font-size:12.9px;line-height:12.9px;color:#222;letter-spacing:-0.13px">Catalogs</div>
<svg style="left:87.5px;top:332px;" width="6" height="9" viewBox="0 0 6 9"><path d="M1 1 L4.5 4.5 L1 8" fill="none" stroke="#222" stroke-width="2"/></svg>
<svg style="left:103px;top:329px;" width="16" height="16" viewBox="0 0 16 16"><rect x="1" y="0.8" width="10.5" height="10.5" rx="2" fill="#f4fbfc" stroke="#44a7bb" stroke-width="1.1"/><rect x="3.6" y="3.4" width="10.4" height="10" rx="1.8" fill="#e0f4f7" stroke="#44a7bb" stroke-width="1.1"/><path d="M9 13.8 H13.8" stroke="#2d8aa0" stroke-width="1.2"/><path d="M12.6 11.8 L15.2 13.8 L12.6 15.8Z" fill="#2d8aa0"/></svg>
<div class="t" style="left:121px;top:332.08px;font-size:12.9px;line-height:12.9px;color:#222;letter-spacing:-0.13px">Event Triggers</div>
<svg style="left:87.5px;top:354px;" width="6" height="9" viewBox="0 0 6 9"><path d="M1 1 L4.5 4.5 L1 8" fill="none" stroke="#222" stroke-width="2"/></svg>
<svg style="left:103px;top:351px;" width="16" height="16" viewBox="0 0 16 16"><path d="M1 2.5 C1 1.6 1.6 1 2.5 1 H11.5 C12.4 1 13 1.6 13 2.5 V4.5 H1Z" fill="#cfeccf" stroke="#2e7d32" stroke-width="1.1"/><rect x="2.8" y="4.5" width="12" height="4" rx="1" fill="#cfeccf" stroke="#2e7d32" stroke-width="1.1"/><path d="M5 8.5 H14.5 V12 L11.5 15 H5Z" fill="#e6f6e6" stroke="#2e7d32" stroke-width="1.1"/><path d="M11.5 15 V12 H14.5" fill="#9fd49f" stroke="#2e7d32" stroke-width="0.9"/><path d="M1 4.5 V7 H2.8" fill="none" stroke="#2e7d32" stroke-width="1.1"/></svg>
<div class="t" style="left:121px;top:354.08px;font-size:12.9px;line-height:12.9px;color:#222;letter-spacing:-0.13px">Extensions</div>
<svg style="left:87.5px;top:376px;" width="6" height="9" viewBox="0 0 6 9"><path d="M1 1 L4.5 4.5 L1 8" fill="none" stroke="#222" stroke-width="2"/></svg>
<svg style="left:103px;top:373px;" width="16" height="16" viewBox="0 0 16 16"><path d="M0.5 6 C0.5 4.6 3.4 3.8 7 3.8 C10.6 3.8 13.5 4.6 13.5 6 V13.5 C13.5 14.9 10.6 15.7 7 15.7 C3.4 15.7 0.5 14.9 0.5 13.5Z" fill="#b49b3b"/><path d="M0.8 8 C2 9 12 9 13.2 8 V9.8 C12 10.8 2 10.8 0.8 9.8Z" fill="#fdf8cf"/><path d="M0.8 11.2 C2 12.2 12 12.2 13.2 11.2 V12.9 C12 13.9 2 13.9 0.8 12.9Z" fill="#fdf8cf"/><ellipse cx="7" cy="6" rx="6.1" ry="1.9" fill="#ad9230"/><path d="M11 4 L14.8 0.8" stroke="#a8862e" stroke-width="1.3"/><path d="M12 0.3 H15.5 V3.8Z" fill="#a8862e"/></svg>
<div class="t" style="left:121px;top:376.08px;font-size:12.9px;line-height:12.9px;color:#222;letter-spacing:-0.13px">Foreign Data Wrappers</div>
<svg style="left:87.5px;top:398px;" width="6" height="9" viewBox="0 0 6 9"><path d="M1 1 L4.5 4.5 L1 8" fill="none" stroke="#222" stroke-width="2"/></svg>
<svg style="left:103px;top:395px;" width="16" height="16" viewBox="0 0 16 16"><path d="M1 5.5 C1 3.3 4.2 2.2 8 2.2 C11.8 2.2 15 3.3 15 5.5 C15 6.5 14.4 7.2 13.6 7.6 C14.4 8 15 8.7 15 9.6 C15 11.5 12.5 12.6 9.8 12.8 L10.8 15 L7.5 12.9 C4 12.8 1 11.6 1 9.6 C1 8.7 1.6 8 2.4 7.6 C1.6 7.2 1 6.5 1 5.5Z" fill="#fbe84f" stroke="#d8b400" stroke-width="1"/><path d="M2.4 7.6 C4.5 8.8 11.5 8.8 13.6 7.6" fill="none" stroke="#d8b400" stroke-width="0.9"/></svg>
<div class="t" style="left:121px;top:398.08px;font-size:12.9px;line-height:12.9px;color:#222;letter-spacing:-0.13px">Languages</div>
<svg style="left:87px;top:423px;" width="9" height="6" viewBox="0 0 9 6"><path d="M1 1 L4.5 4.5 L8 1" fill="none" stroke="#222" stroke-width="2"/></svg>
<svg style="left:103px;top:417px;" width="16" height="16" viewBox="0 0 16 16"><path d="M4.3 1.2999999999999998 L8.3 5.3 L4.3 9.3 L0.2999999999999998 5.3Z" fill="#fbecec" stroke="#d44a52" stroke-width="1.3"/><circle cx="4.3" cy="5.3" r="1.1" fill="#d44a52"/><path d="M11.7 1.2999999999999998 L15.7 5.3 L11.7 9.3 L7.699999999999999 5.3Z" fill="#fbecec" stroke="#d44a52" stroke-width="1.3"/><circle cx="11.7" cy="5.3" r="1.1" fill="#d44a52"/><path d="M8 7.199999999999999 L12.0 11.2 L8 15.2 L4.0 11.2Z" fill="#fbecec" stroke="#d44a52" stroke-width="1.3"/><circle cx="8" cy="11.2" r="1.1" fill="#d44a52"/></svg>
<div class="t" style="left:121px;top:420.08px;font-size:12.9px;line-height:12.9px;color:#222;letter-spacing:-0.13px">Schemas (1)</div>
<svg style="left:107px;top:445px;" width="9" height="6" viewBox="0 0 9 6"><path d="M1 1 L4.5 4.5 L8 1" fill="none" stroke="#222" stroke-width="2"/></svg>
<svg style="left:123px;top:439px;" width="16" height="16" viewBox="0 0 16 16"><path d="M8 1 L15 8 L8 15 L1 8Z" fill="#fff" stroke="#d04a4a" stroke-width="1.3"/><path d="M8 5.5 L10.5 8 L8 10.5 L5.5 8Z" fill="#d8383d"/></svg>
<div class="t" style="left:141px;top:442.08px;font-size:12.9px;line-height:12.9px;color:#222;letter-spacing:-0.13px">public</div>
<svg style="left:143px;top:461px;" width="16" height="16" viewBox="0 0 16 16"><text x="1" y="7" font-family="Liberation Serif" font-weight="bold" font-size="8" fill="#e06666">A</text><text x="1" y="15" font-family="Liberation Serif" font-weight="bold" font-size="8" fill="#e06666">B</text><path d="M12 2 V14 M9 11 L12 14.5 L15 11" fill="none" stroke="#e06666" stroke-width="1.2"/></svg>
<div class="t" style="left:161px;top:464.08px;font-size:12.9px;line-height:12.9px;color:#222;letter-spacing:-0.13px">Collations</div>
<svg style="left:127.5px;top:486px;" width="6" height="9" viewBox="0 0 6 9"><path d="M1 1 L4.5 4.5 L1 8" fill="none" stroke="#222" stroke-width="2"/></svg>
<svg style="left:143px;top:483px;" width="16" height="16" viewBox="0 0 16 16"><path d="M1 8 L7 2 L13 8" fill="none" stroke="#c44" stroke-width="1.3"/><path d="M3 7.5 V13 H9" fill="#e8e0d8" stroke="#888" stroke-width="1"/><path d="M6 10 L11 5.5 L16 10" fill="none" stroke="#c44" stroke-width="1.2"/><rect x="7.5" y="9.5" width="7" height="5.5" fill="#c9b9a6" stroke="#777" stroke-width="0.9"/><rect x="10" y="11.5" width="2" height="3.5" fill="#555"/></svg>
<div class="t" style="left:161px;top:486.08px;font-size:12.9px;line-height:12.9px;color:#222;letter-spacing:-0.13px">Domains</div>
<svg style="left:127.5px;top:508px;" width="6" height="9" viewBox="0 0 6 9"><path d="M1 1 L4.5 4.5 L1 8" fill="none" stroke="#222" stroke-width="2"/></svg>
<svg style="left:143px;top:505px;" width="16" height="16" viewBox="0 0 16 16"><path d="M2.5 1 H9 L13.5 5.5 V15 H2.5Z" fill="#f4f4f4" stroke="#888" stroke-width="1.1"/><path d="M9 1 V5.5 H13.5" fill="none" stroke="#888" stroke-width="1"/><circle cx="9" cy="11" r="2.2" fill="none" stroke="#666" stroke-width="1.2"/></svg>
<div class="t" style="left:161px;top:508.08px;font-size:12.9px;line-height:12.9px;color:#222;letter-spacing:-0.13px">FTS Configurations</div>
<svg style="left:127.5px;top:530px;" width="6" height="9" viewBox="0 0 6 9"><path d="M1 1 L4.5 4.5 L1 8" fill="none" stroke="#222" stroke-width="2"/></svg>
<svg style="left:143px;top:527px;" width="16" height="16" viewBox="0 0 16 16"><rect x="1" y="1.5" width="4" height="13.5" fill="#dce9f2" stroke="#4e6e88" stroke-width="1"/><rect x="5" y="1.5" width="2.5" height="13.5" fill="#cfe0ee" stroke="#4e6e88" stroke-width="1"/><path d="M8 3 L11.5 2 L15.5 14 L12 15Z" fill="#9fd3f0" stroke="#3b86c0" stroke-width="1"/></svg>
<div class="t" style="left:161px;top:530.08px;font-size:12.9px;line-height:12.9px;color:#222;letter-spacing:-0.13px">FTS Dictionaries</div>
<svg style="left:127.5px;top:552px;" width="6" height="9" viewBox="0 0 6 9"><path d="M1 1 L4.5 4.5 L1 8" fill="none" stroke="#222" stroke-width="2"/></svg>
<svg style="left:143px;top:549px;" width="16" height="16" viewBox="0 0 16 16"><text x="0" y="12.5" font-family="Liberation Serif" font-weight="bold" font-size="12.5" fill="#5a9a1e">Aa</text></svg>
<div class="t" style="left:161px;top:552.08px;font-size:12.9px;line-height:12.9px;color:#222;letter-spacing:-0.13px">FTS Parsers</div>
<svg style="left:127.5px;top:574px;" width="6" height="9" viewBox="0 0 6 9"><path d="M1 1 L4.5 4.5 L1 8" fill="none" stroke="#222" stroke-width="2"/></svg>
<svg style="left:143px;top:571px;" width="16" height="16" viewBox="0 0 16 16"><rect x="1" y="1" width="11" height="11" rx="2" fill="#fff6b8" stroke="#d8c02a" stroke-width="1.1"/><rect x="3.5" y="3.5" width="12" height="12" rx="2" fill="#fff6b8" stroke="#d8c02a" stroke-width="1.1"/><circle cx="9" cy="9" r="2.3" fill="none" stroke="#b89a10" stroke-width="1"/><path d="M10.7 10.7 L12.5 12.5" stroke="#b89a10" stroke-width="1"/></svg>
<div class="t" style="left:161px;top:574.08px;font-size:12.9px;line-height:12.9px;color:#222;letter-spacing:-0.13px">FTS Templates</div>
<svg style="left:143px;top:593px;" width="16" height="16" viewBox="0 0 16 16"><rect x="1.5" y="2.5" width="12.5" height="12.5" rx="1.5" fill="#fff" stroke="#3a8fd6" stroke-width="1.2"/><path d="M1.5 6.5 H14 M1.5 10.5 H14 M7.5 6.5 V15" stroke="#3a8fd6" stroke-width="1"/><path d="M11 3.5 L15.5 0.5 M13 0.5 H15.5 V3" fill="none" stroke="#3a8fd6" stroke-width="1"/></svg>
<div class="t" style="left:161px;top:596.08px;font-size:12.9px;line-height:12.9px;color:#222;letter-spacing:-0.13px">Foreign Tables</div>
<svg style="left:143px;top:615px;" width="16" height="16" viewBox="0 0 16 16"><path d="M4 1.5 C2 2.5 3.5 6 1 8 C3.5 10 2 13.5 4 14.5" fill="none" stroke="#3a9bb0" stroke-width="1.1"/><path d="M12 1.5 C14 2.5 12.5 6 15 8 C12.5 10 14 13.5 12 14.5" fill="none" stroke="#3a9bb0" stroke-width="1.1"/><circle cx="8" cy="8" r="4.5" fill="#fff" stroke="#3a9bb0" stroke-width="1.1"/><path d="M6 6.5 H10 M6 8.3 H10 M6 10 H10" stroke="#3a9bb0" stroke-width="0.9"/></svg>
<div class="t" style="left:161px;top:618.08px;font-size:12.9px;line-height:12.9px;color:#222;letter-spacing:-0.13px">Functions</div>
<svg style="left:127.5px;top:640px;" width="6" height="9" viewBox="0 0 6 9"><path d="M1 1 L4.5 4.5 L1 8" fill="none" stroke="#222" stroke-width="2"/></svg>
<svg style="left:143px;top:637px;" width="16" height="16" viewBox="0 0 16 16"><rect x="1" y="1" width="11.5" height="11.5" rx="1.5" fill="#b7dd33" stroke="#7eae10" stroke-width="1"/><rect x="3.5" y="3.5" width="12" height="12" rx="1.5" fill="#c5e84a" stroke="#7eae10" stroke-width="1"/><circle cx="9" cy="9" r="3" fill="none" stroke="#5d8a00" stroke-width="1.1"/><path d="M11 11 L14 14" stroke="#5d8a00" stroke-width="1.1"/></svg>
<div class="t" style="left:161px;top:640.08px;font-size:12.9px;line-height:12.9px;color:#222;letter-spacing:-0.13px">Materialized Views</div>
<svg style="left:127.5px;top:662px;" width="6" height="9" viewBox="0 0 6 9"><path d="M1 1 L4.5 4.5 L1 8" fill="none" stroke="#222" stroke-width="2"/></svg>
<svg style="left:143px;top:659px;" width="16" height="16" viewBox="0 0 16 16"><text x="0" y="11.5" font-family="Liberation Serif" font-weight="bold" font-size="11.5" fill="#7348c7" textLength="16" lengthAdjust="spacingAndGlyphs">1.3</text></svg>
<div class="t" style="left:161px;top:662.08px;font-size:12.9px;line-height:12.9px;color:#222;letter-spacing:-0.13px">Sequences</div>
<svg style="left:143px;top:681px;" width="16" height="16" viewBox="0 0 16 16"><rect x="1" y="1.5" width="14" height="14" rx="2" fill="#fff" stroke="#3a8fd6" stroke-width="1.2"/><rect x="1.6" y="2" width="13" height="3.5" fill="#cfe5f8"/><path d="M1 5.5 H15 M1 10 H15 M8 5.5 V15.5" stroke="#3a8fd6" stroke-width="1"/><rect x="8.5" y="10.5" width="6" height="4.5" fill="#e8e8e8"/><rect x="1.6" y="10.5" width="6" height="4.5" fill="#e8e8e8"/></svg>
<div class="t" style="left:161px;top:684.08px;font-size:12.9px;line-height:12.9px;color:#222;letter-spacing:-0.13px">Tables</div>
<svg style="left:143px;top:703px;" width="16" height="16" viewBox="0 0 16 16"><path d="M4 1.5 C2 2.5 3.5 6 1 8 C3.5 10 2 13.5 4 14.5" fill="none" stroke="#3a9bb0" stroke-width="1.1"/><path d="M12 1.5 C14 2.5 12.5 6 15 8 C12.5 10 14 13.5 12 14.5" fill="none" stroke="#3a9bb0" stroke-width="1.1"/><circle cx="8" cy="8" r="4.5" fill="#fff" stroke="#3a9bb0" stroke-width="1.1"/><path d="M6 6.5 H10 M6 8.3 H10 M6 10 H10" stroke="#3a9bb0" stroke-width="0.9"/><path d="M11 14 H15.5 M14 12.5 L16 14 L14 15.5" fill="none" stroke="#1d6f85" stroke-width="1.3"/></svg>
<div class="t" style="left:161px;top:706.08px;font-size:12.9px;line-height:12.9px;color:#222;letter-spacing:-0.13px">Trigger Functions</div>
<svg style="left:127.5px;top:728px;" width="6" height="9" viewBox="0 0 6 9"><path d="M1 1 L4.5 4.5 L1 8" fill="none" stroke="#222" stroke-width="2"/></svg>
<svg style="left:143px;top:725px;" width="16" height="16" viewBox="0 0 16 16"><rect x="1.5" y="1.5" width="10" height="10" rx="1.5" fill="#fff" stroke="#4cb877" stroke-width="1.1"/><rect x="4.5" y="4.5" width="11" height="11" rx="1.5" fill="#d4f2df" stroke="#4cb877" stroke-width="1.1"/></svg>
<div class="t" style="left:161px;top:728.08px;font-size:12.9px;line-height:12.9px;color:#222;letter-spacing:-0.13px">Types</div>
<div class="a" style="left:0px;top:129px;width:373px;height:31px;background:#fff"></div>
<div class="a" style="left:0px;top:160px;width:373px;height:1px;background:#dde0e6"></div>
<div class="t" style="left:10.5px;top:137.73px;font-size:14.5px;line-height:14.5px;color:#222;letter-spacing:-0.347px;">Browser</div>
<div class="a" style="left:283px;top:133px;width:26px;height:24px;background:#fff;border:1px solid #b9c0cb;border-radius:4px"></div>
<div class="a" style="left:313px;top:133px;width:26px;height:24px;background:#fff;border:1px solid #dfe2e7;border-radius:4px"></div>
<div class="a" style="left:343px;top:133px;width:26px;height:24px;background:#fff;border:1px solid #dfe2e7;border-radius:4px"></div>
<svg style="left:292px;top:138px;" width="9" height="14" viewBox="0 0 9 14"><path d="M4.2 0.5 H8.2 L5.6 5.6 H8.5 L2 13.5 L3.6 7.4 H0.8Z" fill="#1a1a1a"/></svg>
<svg style="left:319px;top:138px;" width="15" height="13" viewBox="0 0 15 13"><rect x="1" y="1" width="13" height="11" fill="#fff"/><rect x="1" y="1" width="13" height="2" fill="#7a7a7a"/><path d="M1 1 V12 H14 V1 M1 5.5 H14 M1 8.8 H14 M5.3 1 V12 M9.6 1 V12" fill="none" stroke="#7a7a7a" stroke-width="1.1"/></svg>
<svg style="left:350px;top:139px;" width="13" height="13" viewBox="0 0 13 13"><path d="M0.5 0.8 H12 L7.4 6 V12 L5 9.8 V6Z" fill="#858585"/></svg>
<div class="a" style="left:368px;top:190px;width:5px;height:452px;background:#f2926a;border-radius:2px"></div>
<div class="a" style="left:373px;top:129px;width:1px;height:611px;background:#dde0e6"></div>
<div class="a" style="left:374px;top:129px;width:992px;height:31px;background:#fff"></div>
<div class="a" style="left:374px;top:160px;width:992px;height:1px;background:#dde0e6"></div>
<div class="t" style="left:384.2px;top:138.15px;font-size:14px;line-height:14px;color:#2c6592;letter-spacing:0.001px;">Dashboard</div>
<div class="t" style="left:472.8px;top:138.15px;font-size:14px;line-height:14px;color:#222;letter-spacing:0.021px;">Properties</div>
<div class="t" style="left:557px;top:138.15px;font-size:14px;line-height:14px;color:#222;letter-spacing:-1.507px;">SQL</div>
<div class="t" style="left:602.8px;top:138.15px;font-size:14px;line-height:14px;color:#222;letter-spacing:0.198px;">Statistics</div>
<div class="t" style="left:681.5px;top:138.15px;font-size:14px;line-height:14px;color:#222;letter-spacing:-0.392px;">Dependencies</div>
<div class="t" style="left:786.9px;top:138.15px;font-size:14px;line-height:14px;color:#222;letter-spacing:-0.167px;">Dependents</div>
<div class="a" style="left:374px;top:157px;width:89px;height:3px;background:#2c5f8c"></div>
<svg style="left:1346px;top:141px;" width="10" height="10" viewBox="0 0 10 10"><path d="M1.5 1.5 L8.5 8.5 M8.5 1.5 L1.5 8.5" stroke="#222" stroke-width="2.6"/></svg>
<div class="a" style="left:374px;top:161px;width:980px;height:579px;background:#ebeef3"></div>
<div class="a" style="left:1354px;top:161px;width:7px;height:579px;background:#fff"></div>
<div class="a" style="left:1361px;top:161px;width:5px;height:561px;background:#f2926a;border-radius:2px"></div>
<div class="a" style="left:382px;top:169px;width:475px;height:200px;background:#fff;border:1px solid #dde0e6;border-radius:4px"></div>
<div class="a" style="left:383px;top:199px;width:473px;height:1px;background:#dde0e6"></div>
<div class="t" style="left:391.8px;top:176.79px;font-size:15.6px;line-height:15.6px;color:#222;letter-spacing:-0.026px;-webkit-text-stroke:0.5px #222">Database sessions</div>
<div class="a" style="left:424px;top:220px;width:66px;height:60px;background:rgba(233,240,250,0.55);border-radius:5px"></div>
<div class="a" style="left:432px;top:228px;width:14px;height:10px;background:#2eaeea"></div>
<div class="t" style="left:449.5px;top:228.01px;font-size:11.8px;line-height:11.8px;color:#505050;">Total</div>
<div class="a" style="left:432px;top:245px;width:14px;height:10px;background:#c4d82f"></div>
<div class="t" style="left:449.5px;top:245.01px;font-size:11.8px;line-height:11.8px;color:#505050;">Active</div>
<div class="a" style="left:432px;top:263px;width:14px;height:10px;background:#cd6c74"></div>
<div class="t" style="left:449.5px;top:263.01px;font-size:11.8px;line-height:11.8px;color:#505050;">Idle</div>
<div class="t" style="left:215.5px;width:200px;text-align:right;top:209.10px;font-size:11.7px;line-height:11.7px;color:#333;">1.00</div>
<div class="t" style="left:215.5px;width:200px;text-align:right;top:238.10px;font-size:11.7px;line-height:11.7px;color:#333;">0.80</div>
<div class="t" style="left:215.5px;width:200px;text-align:right;top:267.10px;font-size:11.7px;line-height:11.7px;color:#333;">0.60</div>
<div class="t" style="left:215.5px;width:200px;text-align:right;top:296.10px;font-size:11.7px;line-height:11.7px;color:#333;">0.40</div>
<div class="t" style="left:215.5px;width:200px;text-align:right;top:325.10px;font-size:11.7px;line-height:11.7px;color:#333;">0.20</div>
<div class="t" style="left:215.5px;width:200px;text-align:right;top:353.10px;font-size:11.7px;line-height:11.7px;color:#333;">0.00</div>
<svg style="left:0px;top:0px;pointer-events:none" width="1366" height="740" viewBox="0 0 1366 740"><line x1="419.5" y1="244.5" x2="847" y2="244.5" stroke="#8a8a8a" stroke-width="1"/><line x1="419.5" y1="273.5" x2="847" y2="273.5" stroke="#8a8a8a" stroke-width="1"/><line x1="419.5" y1="302.5" x2="847" y2="302.5" stroke="#8a8a8a" stroke-width="1"/><line x1="419.5" y1="331.5" x2="847" y2="331.5" stroke="#8a8a8a" stroke-width="1"/><line x1="419.5" y1="359.5" x2="847" y2="359.5" stroke="#8a8a8a" stroke-width="1"/><polyline points="419.0,215.5 847.0,215.5" fill="none" stroke="#c3d700" stroke-width="1.6" stroke-linejoin="round"/><line x1="419" y1="359.5" x2="847" y2="359.5" stroke="#c84a4c" stroke-width="1.2"/></svg>
<div class="a" style="left:872px;top:169px;width:475px;height:200px;background:#fff;border:1px solid #dde0e6;border-radius:4px"></div>
<div class="a" style="left:873px;top:199px;width:473px;height:1px;background:#dde0e6"></div>
<div class="t" style="left:881.8px;top:176.79px;font-size:15.6px;line-height:15.6px;color:#222;letter-spacing:0.039px;-webkit-text-stroke:0.5px #222">Transactions per second</div>
<div class="a" style="left:914px;top:220px;width:100px;height:60px;background:rgba(233,240,250,0.55);border-radius:5px"></div>
<div class="a" style="left:922px;top:228px;width:14px;height:10px;background:#2eaeea"></div>
<div class="t" style="left:939.5px;top:228.01px;font-size:11.8px;line-height:11.8px;color:#505050;">Transactions</div>
<div class="a" style="left:922px;top:245px;width:14px;height:10px;background:#c4d82f"></div>
<div class="t" style="left:939.5px;top:245.01px;font-size:11.8px;line-height:11.8px;color:#505050;">Commits</div>
<div class="a" style="left:922px;top:263px;width:14px;height:10px;background:#cd6c74"></div>
<div class="t" style="left:939.5px;top:263.01px;font-size:11.8px;line-height:11.8px;color:#505050;">Rollbacks</div>
<div class="t" style="left:705.5px;width:200px;text-align:right;top:209.10px;font-size:11.7px;line-height:11.7px;color:#333;">3.00</div>
<div class="t" style="left:705.5px;width:200px;text-align:right;top:233.10px;font-size:11.7px;line-height:11.7px;color:#333;">2.50</div>
<div class="t" style="left:705.5px;width:200px;text-align:right;top:257.10px;font-size:11.7px;line-height:11.7px;color:#333;">2.00</div>
<div class="t" style="left:705.5px;width:200px;text-align:right;top:281.10px;font-size:11.7px;line-height:11.7px;color:#333;">1.50</div>
<div class="t" style="left:705.5px;width:200px;text-align:right;top:305.10px;font-size:11.7px;line-height:11.7px;color:#333;">1.00</div>
<div class="t" style="left:705.5px;width:200px;text-align:right;top:329.10px;font-size:11.7px;line-height:11.7px;color:#333;">0.50</div>
<div class="t" style="left:705.5px;width:200px;text-align:right;top:353.10px;font-size:11.7px;line-height:11.7px;color:#333;">0.00</div>
<svg style="left:0px;top:0px;pointer-events:none" width="1366" height="740" viewBox="0 0 1366 740"><line x1="909.4" y1="239.5" x2="1337" y2="239.5" stroke="#8a8a8a" stroke-width="1"/><line x1="909.4" y1="263.5" x2="1337" y2="263.5" stroke="#8a8a8a" stroke-width="1"/><line x1="909.4" y1="287.5" x2="1337" y2="287.5" stroke="#8a8a8a" stroke-width="1"/><line x1="909.4" y1="311.5" x2="1337" y2="311.5" stroke="#8a8a8a" stroke-width="1"/><line x1="909.4" y1="335.5" x2="1337" y2="335.5" stroke="#8a8a8a" stroke-width="1"/><line x1="909.4" y1="359.5" x2="1337" y2="359.5" stroke="#8a8a8a" stroke-width="1"/><line x1="909.4" y1="359.5" x2="1337" y2="359.5" stroke="#c84a4c" stroke-width="1.2"/><polyline points="909.4,311.5 929.9,311.5 934.9,215.5 939.0,311.5 1182.6,311.5 1186.5,215.5 1191.1,311.5 1199.4,311.5 1204.0,263.5 1208.4,359.5 1212.5,263.5 1217.1,311.5 1221.0,311.5 1225.2,263.5 1230.2,359.5 1234.4,263.5 1243.1,263.5 1247.0,359.5 1250.9,263.5 1256.2,263.5 1259.7,359.5 1263.8,263.5 1268.4,311.5 1337.0,311.5" fill="none" stroke="#2eaeea" stroke-width="2.2" stroke-linejoin="round"/><polyline points="909.4,311.5 929.9,311.5 934.9,215.5 939.0,311.5 1182.6,311.5 1186.5,215.5 1191.1,311.5 1199.4,311.5 1204.0,263.5 1208.4,359.5 1212.5,263.5 1217.1,311.5 1221.0,311.5 1225.2,263.5 1230.2,359.5 1234.4,263.5 1243.1,263.5 1247.0,359.5 1250.9,263.5 1256.2,263.5 1259.7,359.5 1263.8,263.5 1268.4,311.5 1337.0,311.5" fill="none" stroke="#c3d700" stroke-width="2.5" stroke-linejoin="round"/></svg>
<div class="a" style="left:382px;top:376px;width:311px;height:200px;background:#fff;border:1px solid #dde0e6;border-radius:4px"></div>
<div class="a" style="left:383px;top:406px;width:309px;height:1px;background:#dde0e6"></div>
<div class="t" style="left:391.5px;top:383.79px;font-size:15.6px;line-height:15.6px;color:#222;letter-spacing:-0.315px;-webkit-text-stroke:0.5px #222">Tuples in</div>
<div class="a" style="left:424px;top:427px;width:77px;height:60px;background:rgba(233,240,250,0.55);border-radius:5px"></div>
<div class="a" style="left:432px;top:435px;width:14px;height:10px;background:#2eaeea"></div>
<div class="t" style="left:449.5px;top:435.01px;font-size:11.8px;line-height:11.8px;color:#505050;">Inserts</div>
<div class="a" style="left:432px;top:452px;width:14px;height:10px;background:#c4d82f"></div>
<div class="t" style="left:449.5px;top:452.01px;font-size:11.8px;line-height:11.8px;color:#505050;">Updates</div>
<div class="a" style="left:432px;top:470px;width:14px;height:10px;background:#cd6c74"></div>
<div class="t" style="left:449.5px;top:470.01px;font-size:11.8px;line-height:11.8px;color:#505050;">Deletes</div>
<div class="t" style="left:215.60000000000002px;width:200px;text-align:right;top:416.10px;font-size:11.7px;line-height:11.7px;color:#333;">1.00</div>
<div class="t" style="left:215.60000000000002px;width:200px;text-align:right;top:488.10px;font-size:11.7px;line-height:11.7px;color:#333;">0.50</div>
<div class="t" style="left:215.60000000000002px;width:200px;text-align:right;top:560.10px;font-size:11.7px;line-height:11.7px;color:#333;">0.00</div>
<svg style="left:0px;top:0px;pointer-events:none" width="1366" height="740" viewBox="0 0 1366 740"><line x1="419" y1="494.5" x2="684" y2="494.5" stroke="#8a8a8a" stroke-width="1"/><line x1="419" y1="566.5" x2="684" y2="566.5" stroke="#8a8a8a" stroke-width="1"/><line x1="419" y1="566.5" x2="684" y2="566.5" stroke="#c84a4c" stroke-width="1.2"/></svg>
<div class="a" style="left:708px;top:376px;width:312px;height:200px;background:#fff;border:1px solid #dde0e6;border-radius:4px"></div>
<div class="a" style="left:709px;top:406px;width:310px;height:1px;background:#dde0e6"></div>
<div class="t" style="left:717.6px;top:383.79px;font-size:15.6px;line-height:15.6px;color:#222;letter-spacing:0.037px;-webkit-text-stroke:0.5px #222">Tuples out</div>
<div class="a" style="left:754px;top:427px;width:79px;height:42px;background:rgba(233,240,250,0.55);border-radius:5px"></div>
<div class="a" style="left:762px;top:435px;width:14px;height:10px;background:#2eaeea"></div>
<div class="t" style="left:779.5px;top:435.01px;font-size:11.8px;line-height:11.8px;color:#505050;">Fetched</div>
<div class="a" style="left:762px;top:452px;width:14px;height:10px;background:#c4d82f"></div>
<div class="t" style="left:779.5px;top:452.01px;font-size:11.8px;line-height:11.8px;color:#505050;">Returned</div>
<div class="t" style="left:545px;width:200px;text-align:right;top:416.10px;font-size:11.7px;line-height:11.7px;color:#333;">3000</div>
<div class="t" style="left:545px;width:200px;text-align:right;top:440.10px;font-size:11.7px;line-height:11.7px;color:#333;">2500</div>
<div class="t" style="left:545px;width:200px;text-align:right;top:464.10px;font-size:11.7px;line-height:11.7px;color:#333;">2000</div>
<div class="t" style="left:545px;width:200px;text-align:right;top:488.10px;font-size:11.7px;line-height:11.7px;color:#333;">1500</div>
<div class="t" style="left:545px;width:200px;text-align:right;top:512.10px;font-size:11.7px;line-height:11.7px;color:#333;">1000</div>
<div class="t" style="left:545px;width:200px;text-align:right;top:536.10px;font-size:11.7px;line-height:11.7px;color:#333;">500</div>
<div class="t" style="left:545px;width:200px;text-align:right;top:560.10px;font-size:11.7px;line-height:11.7px;color:#333;">0</div>
<svg style="left:0px;top:0px;pointer-events:none" width="1366" height="740" viewBox="0 0 1366 740"><line x1="748.8" y1="446.5" x2="1010" y2="446.5" stroke="#8a8a8a" stroke-width="1"/><line x1="748.8" y1="470.5" x2="1010" y2="470.5" stroke="#8a8a8a" stroke-width="1"/><line x1="748.8" y1="494.5" x2="1010" y2="494.5" stroke="#8a8a8a" stroke-width="1"/><line x1="748.8" y1="518.5" x2="1010" y2="518.5" stroke="#8a8a8a" stroke-width="1"/><line x1="748.8" y1="542.5" x2="1010" y2="542.5" stroke="#8a8a8a" stroke-width="1"/><line x1="748.8" y1="566.5" x2="1010" y2="566.5" stroke="#8a8a8a" stroke-width="1"/><polyline points="748.8,566.5 762.0,566.5 763.5,537.7 764.7,516.1 766.0,537.7 767.2,566.5 915.5,566.5 917.0,537.7 918.5,516.1 920.0,537.7 921.5,566.5 927.0,566.5 928.0,556.9 929.0,549.7 930.0,556.9 931.0,566.5 939.8,566.5 941.0,470.5 941.8,424.9 943.0,470.5 946.0,566.5 947.5,566.5 948.8,470.5 949.7,426.3 951.0,470.5 954.5,566.5 958.0,566.5 959.2,556.9 960.5,549.7 961.8,556.9 963.0,566.5 1010.0,566.5" fill="none" stroke="#c3d700" stroke-width="2.3" stroke-linejoin="round"/><polyline points="762.0,566.4 766.0,566.4" fill="none" stroke="#2eaeea" stroke-width="2" stroke-linejoin="round"/><polyline points="940.0,566.4 944.0,565.0 948.0,566.4" fill="none" stroke="#2eaeea" stroke-width="2" stroke-linejoin="round"/></svg>
<div class="a" style="left:1035px;top:376px;width:311px;height:200px;background:#fff;border:1px solid #dde0e6;border-radius:4px"></div>
<div class="a" style="left:1036px;top:406px;width:309px;height:1px;background:#dde0e6"></div>
<div class="t" style="left:1044.2px;top:383.79px;font-size:15.6px;line-height:15.6px;color:#222;letter-spacing:0.065px;-webkit-text-stroke:0.5px #222">Block I/O</div>
<div class="a" style="left:1067px;top:427px;width:65px;height:42px;background:rgba(233,240,250,0.55);border-radius:5px"></div>
<div class="a" style="left:1075px;top:435px;width:14px;height:10px;background:#2eaeea"></div>
<div class="t" style="left:1092.5px;top:435.01px;font-size:11.8px;line-height:11.8px;color:#505050;">Reads</div>
<div class="a" style="left:1075px;top:452px;width:14px;height:10px;background:#c4d82f"></div>
<div class="t" style="left:1092.5px;top:452.01px;font-size:11.8px;line-height:11.8px;color:#505050;">Hits</div>
<div class="t" style="left:858.4000000000001px;width:200px;text-align:right;top:416.10px;font-size:11.7px;line-height:11.7px;color:#333;">80</div>
<div class="t" style="left:858.4000000000001px;width:200px;text-align:right;top:452.10px;font-size:11.7px;line-height:11.7px;color:#333;">60</div>
<div class="t" style="left:858.4000000000001px;width:200px;text-align:right;top:488.10px;font-size:11.7px;line-height:11.7px;color:#333;">40</div>
<div class="t" style="left:858.4000000000001px;width:200px;text-align:right;top:524.10px;font-size:11.7px;line-height:11.7px;color:#333;">20</div>
<div class="t" style="left:858.4000000000001px;width:200px;text-align:right;top:560.10px;font-size:11.7px;line-height:11.7px;color:#333;">0</div>
<svg style="left:0px;top:0px;pointer-events:none" width="1366" height="740" viewBox="0 0 1366 740"><line x1="1062" y1="458.5" x2="1337" y2="458.5" stroke="#8a8a8a" stroke-width="1"/><line x1="1062" y1="494.5" x2="1337" y2="494.5" stroke="#8a8a8a" stroke-width="1"/><line x1="1062" y1="530.5" x2="1337" y2="530.5" stroke="#8a8a8a" stroke-width="1"/><line x1="1062" y1="566.5" x2="1337" y2="566.5" stroke="#8a8a8a" stroke-width="1"/><polyline points="1062.0,566.5 1075.8,566.5 1077.8,444.1 1078.6,444.1 1080.6,566.5 1238.3,566.5 1240.3,440.5 1241.1,440.5 1243.1,566.5 1249.5,566.5 1251.5,472.9 1252.3,472.9 1254.3,566.5 1262.6,566.5 1264.6,427.9 1265.4,427.9 1267.4,566.5 1271.1,566.5 1273.1,433.3 1273.9,433.3 1275.9,566.5 1282.4,566.5 1284.4,517.9 1285.2,517.9 1287.2,566.5 1337.0,566.5" fill="none" stroke="#c3d700" stroke-width="2.4" stroke-linejoin="round"/><polyline points="1249.3,566.5 1251.3,550.3 1253.3,566.5" fill="none" stroke="#2eaeea" stroke-width="2" stroke-linejoin="round"/><polyline points="1274.3,566.5 1276.3,519.7 1278.3,566.5" fill="none" stroke="#2eaeea" stroke-width="2" stroke-linejoin="round"/><polyline points="1282.5,566.5 1284.0,562.9 1285.5,566.5" fill="none" stroke="#2eaeea" stroke-width="2" stroke-linejoin="round"/></svg>
<div class="a" style="left:382px;top:584px;width:965px;height:170px;background:#ebeef3;border:1px solid #dde0e6;border-radius:4px"></div>
<div class="a" style="left:383px;top:585px;width:963px;height:61px;background:#fff;border-radius:4px 4px 0 0"></div>
<div class="a" style="left:383px;top:614px;width:963px;height:1px;background:#dde0e6"></div>
<div class="a" style="left:383px;top:646px;width:963px;height:1px;background:#dde0e6"></div>
<div class="t" style="left:391.3px;top:591.79px;font-size:15.6px;line-height:15.6px;color:#222;letter-spacing:0.124px;-webkit-text-stroke:0.5px #222">Server activity</div>
<div class="t" style="left:393px;top:624.15px;font-size:14px;line-height:14px;color:#2c6592;letter-spacing:-0.330px;">Sessions</div>
<div class="t" style="left:468.5px;top:624.15px;font-size:14px;line-height:14px;color:#222;letter-spacing:-0.093px;">Locks</div>
<div class="t" style="left:525.4px;top:624.15px;font-size:14px;line-height:14px;color:#222;letter-spacing:-0.033px;">Prepared Transactions</div>
<div class="a" style="left:383px;top:643px;width:75px;height:3px;background:#2c5f8c"></div>
<div class="a" style="left:1109px;top:615px;width:1px;height:31px;background:#dde0e6"></div>
<div class="a" style="left:1309px;top:615px;width:1px;height:31px;background:#dde0e6"></div>
<svg style="left:1122px;top:624px;" width="14" height="14" viewBox="0 0 14 14"><circle cx="5.5" cy="5.5" r="4.3" fill="none" stroke="#222" stroke-width="2.2"/><path d="M8.6 8.6 L12.5 12.5" stroke="#222" stroke-width="2.6" stroke-linecap="round"/></svg>
<div class="t" style="left:1158.3px;top:624.15px;font-size:14px;line-height:14px;color:#8d96a3;letter-spacing:-0.512px;">Search</div>
<svg style="left:1321px;top:625px;" width="14" height="12" viewBox="0 0 14 12"><path d="M2 5 A5.2 5.2 0 0 1 11.5 3.5" fill="none" stroke="#222" stroke-width="2"/><path d="M12.5 0.5 V5 H8Z" fill="#222"/><path d="M12 7 A5.2 5.2 0 0 1 2.5 8.5" fill="none" stroke="#222" stroke-width="2"/><path d="M1.5 11.5 V7 H6Z" fill="#222"/></svg>
<div class="a" style="left:391px;top:655px;width:947px;height:78px;background:#fff;border:1px solid #dde0e6;border-radius:4px"></div>
<div class="a" style="left:392px;top:701px;width:945px;height:1px;background:#dde0e6"></div>
<div class="a" style="left:416px;top:656px;width:1px;height:76px;background:#dde0e6"></div>
<div class="a" style="left:441px;top:656px;width:1px;height:76px;background:#dde0e6"></div>
<div class="a" style="left:466px;top:656px;width:1px;height:76px;background:#dde0e6"></div>
<div class="a" style="left:521px;top:656px;width:1px;height:76px;background:#dde0e6"></div>
<div class="a" style="left:593px;top:656px;width:1px;height:76px;background:#dde0e6"></div>
<div class="a" style="left:775px;top:656px;width:1px;height:76px;background:#dde0e6"></div>
<div class="a" style="left:870px;top:656px;width:1px;height:76px;background:#dde0e6"></div>
<div class="a" style="left:1058px;top:656px;width:1px;height:76px;background:#dde0e6"></div>
<div class="a" style="left:1116px;top:656px;width:1px;height:76px;background:#dde0e6"></div>
<div class="a" style="left:1212px;top:656px;width:1px;height:76px;background:#dde0e6"></div>
<div class="t" style="left:471.5px;top:670.96px;font-size:15.4px;line-height:15.4px;color:#222;letter-spacing:-0.886px;-webkit-text-stroke:0.5px #222">PID</div>
<div class="t" style="left:526.1px;top:670.96px;font-size:15.4px;line-height:15.4px;color:#222;letter-spacing:-0.539px;-webkit-text-stroke:0.5px #222">User</div>
<div class="t" style="left:597.8px;top:670.96px;font-size:15.4px;line-height:15.4px;color:#222;letter-spacing:0.436px;-webkit-text-stroke:0.5px #222">Application</div>
<div class="t" style="left:780px;top:670.96px;font-size:15.4px;line-height:15.4px;color:#222;letter-spacing:0.125px;-webkit-text-stroke:0.5px #222">Client</div>
<div class="t" style="left:875.6px;top:670.96px;font-size:15.4px;line-height:15.4px;color:#222;letter-spacing:0.353px;-webkit-text-stroke:0.5px #222">Backend start</div>
<div class="t" style="left:1063px;top:670.96px;font-size:15.4px;line-height:15.4px;color:#222;letter-spacing:0.435px;-webkit-text-stroke:0.5px #222">State</div>
<div class="t" style="left:1121px;top:670.96px;font-size:15.4px;line-height:15.4px;color:#222;letter-spacing:-0.187px;-webkit-text-stroke:0.5px #222">Wait event</div>
<div class="t" style="left:1217.4px;top:670.96px;font-size:15.4px;line-height:15.4px;color:#222;letter-spacing:0.095px;-webkit-text-stroke:0.5px #222">Blocking PIDs</div>
<div class="t" style="left:471.5px;top:709.73px;font-size:14.5px;line-height:14.5px;color:#222;letter-spacing:-0.331px;">26535</div>
<div class="t" style="left:526px;top:709.73px;font-size:14.5px;line-height:14.5px;color:#222;letter-spacing:-0.116px;">postgres</div>
<div class="t" style="left:597.8px;top:709.73px;font-size:14.5px;line-height:14.5px;color:#222;letter-spacing:-0.413px;">pgAdmin 4 - DB:postgres</div>
<div class="t" style="left:780px;top:709.73px;font-size:14.5px;line-height:14.5px;color:#222;letter-spacing:-0.160px;">192.168.1.1</div>
<div class="t" style="left:875.6px;top:709.73px;font-size:14.5px;line-height:14.5px;color:#222;letter-spacing:-0.540px;">2019-12-03 09:08:15 UTC</div>
<div class="t" style="left:1063px;top:709.73px;font-size:14.5px;line-height:14.5px;color:#222;letter-spacing:-0.176px;">active</div>
<svg style="left:398px;top:711px;" width="12" height="12" viewBox="0 0 12 12"><circle cx="6" cy="6" r="6" fill="#e0262c"/><path d="M3.6 3.6 L8.4 8.4 M8.4 3.6 L3.6 8.4" stroke="#fff" stroke-width="1.8"/></svg>
<div class="a" style="left:423px;top:711px;width:12px;height:12px;background:#222"></div>
<svg style="left:450px;top:713px;" width="6" height="9" viewBox="0 0 6 9"><path d="M0.5 0.5 L5.5 4.5 L0.5 8.5Z" fill="#222"/></svg>
</body></html>
